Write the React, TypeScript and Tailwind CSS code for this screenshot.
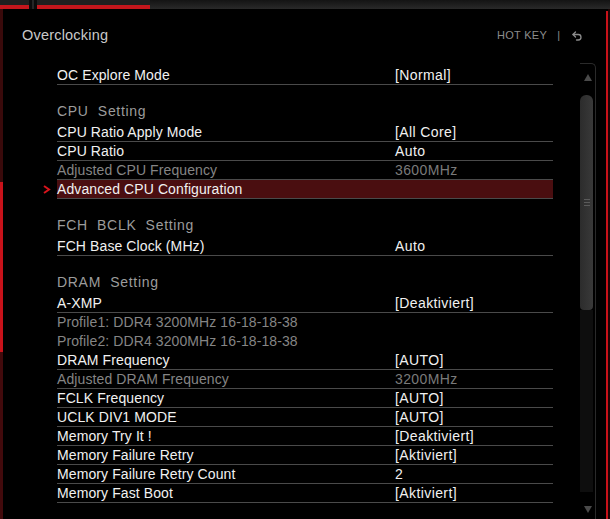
import { Undo2 } from 'lucide-react';

type Row =
  | { kind: 'gap' }
  | { kind: 'head'; label: string }
  | { kind: 'item'; label: string; value?: string; dim?: boolean; active?: boolean; bare?: boolean };

const rows: Row[] = [
  { kind: 'item', label: 'OC Explore Mode', value: '[Normal]' },
  { kind: 'gap' },
  { kind: 'head', label: 'CPU  Setting' },
  { kind: 'item', label: 'CPU Ratio Apply Mode', value: '[All Core]' },
  { kind: 'item', label: 'CPU Ratio', value: 'Auto' },
  { kind: 'item', label: 'Adjusted CPU Frequency', value: '3600MHz', dim: true },
  { kind: 'item', label: 'Advanced CPU Configuration', active: true },
  { kind: 'gap' },
  { kind: 'head', label: 'FCH  BCLK  Setting' },
  { kind: 'item', label: 'FCH Base Clock (MHz)', value: 'Auto' },
  { kind: 'gap' },
  { kind: 'head', label: 'DRAM  Setting' },
  { kind: 'item', label: 'A-XMP', value: '[Deaktiviert]' },
  { kind: 'item', label: 'Profile1: DDR4 3200MHz 16-18-18-38', dim: true, bare: true },
  { kind: 'item', label: 'Profile2: DDR4 3200MHz 16-18-18-38', dim: true, bare: true },
  { kind: 'item', label: 'DRAM Frequency', value: '[AUTO]' },
  { kind: 'item', label: 'Adjusted DRAM Frequency', value: '3200MHz', dim: true },
  { kind: 'item', label: 'FCLK Frequency', value: '[AUTO]' },
  { kind: 'item', label: 'UCLK DIV1 MODE', value: '[AUTO]' },
  { kind: 'item', label: 'Memory Try It !', value: '[Deaktiviert]' },
  { kind: 'item', label: 'Memory Failure Retry', value: '[Aktiviert]' },
  { kind: 'item', label: 'Memory Failure Retry Count', value: '2' },
  { kind: 'item', label: 'Memory Fast Boot', value: '[Aktiviert]' },
];

function TopTab({ width }: { width: string }) {
  return (
    <div className={`${width} flex flex-col`}>
      <div className="h-[5px] bg-[#1f1f1f]" />
      <div className="flex-1 bg-[#c3161c]" />
    </div>
  );
}

function SettingRow({ row }: { row: Row }) {
  if (row.kind === 'gap') return <div className="h-[17px]" />;
  if (row.kind === 'head') {
    return (
      <div className="h-[21px] whitespace-pre text-[14px] leading-[19px] tracking-[0.7px] text-[#9c9c9c]">
        {row.label}
      </div>
    );
  }
  const tone = row.dim ? 'text-[#858585]' : 'text-[#f1f1f1]';
  return (
    <div
      className={`relative flex h-[19px] items-center border-b bg-clip-padding ${
        row.bare ? 'border-transparent' : 'border-[#4a4a4a]'
      } ${row.active ? 'bg-[#4a0e10]' : ''}`}
    >
      {row.active && (
        <svg className="absolute left-[-14px] top-[5px]" width="8" height="9" viewBox="0 0 8 9">
          <path d="M1 1l5 3.5L1 8" fill="none" stroke="#d8141c" strokeWidth="2" />
        </svg>
      )}
      <span className={`w-[338px] shrink-0 text-[14px] leading-[18px] tracking-[0.1px] ${tone}`}>{row.label}</span>
      {row.value && (
        <span className={`text-[14px] leading-[18px] tracking-[0.4px] ${row.dim ? 'text-[#7a7a7a]' : 'text-[#f1f1f1]'}`}>
          {row.value}
        </span>
      )}
    </div>
  );
}

function ScrollBar() {
  return (
    <div className="flex w-[16px] flex-col rounded-tr-[5px] border-r border-t border-[#2a2a2a]">
      <div className="flex h-[31px] items-start justify-center pt-[10px]">
        <svg width="8" height="7" viewBox="0 0 8 7">
          <path d="M4 0L8 7H0z" fill="#4a4a4a" />
        </svg>
      </div>
      <div className="flex h-[215px] w-[13px] items-center justify-center rounded-t-[6px] rounded-b-[4px] bg-gradient-to-r from-[#2c2c2c] to-[#393939]">
        <div className="flex flex-col gap-[2px]">
          <div className="h-[1px] w-[6px] bg-[#5a5a5a]" />
          <div className="h-[1px] w-[6px] bg-[#5a5a5a]" />
          <div className="h-[1px] w-[6px] bg-[#5a5a5a]" />
        </div>
      </div>
      <div className="h-[182px] w-[13px] bg-[#0e0e0e]" />
      <div className="flex flex-1 items-start justify-center pt-[14px]">
        <svg width="8" height="7" viewBox="0 0 8 7">
          <path d="M0 0H8L4 7z" fill="#4a4a4a" />
        </svg>
      </div>
    </div>
  );
}

export default function App() {
  return (
    <div className="flex h-[519px] w-[610px] flex-col overflow-hidden bg-black font-['Liberation_Sans',Arial,sans-serif]">
      {/* tab strip */}
      <div className="flex h-[9px] shrink-0">
        <TopTab width="w-[29px]" />
        <div className="flex w-[8px] justify-center bg-[#0b0b0b]">
          <div className="w-[2px] bg-[#262626]" />
        </div>
        <TopTab width="w-[113px]" />
        <div className="flex-1 bg-gradient-to-b from-[#141414] to-[#2a2a2a]" />
      </div>

      <div className="flex flex-1">
        {/* left accent */}
        <div className="flex w-[3px] flex-col">
          <div className="h-[173px] bg-[#3a0a0b]" />
          <div className="h-[170px] bg-[#c8121a]" />
          <div className="flex-1 bg-[#420a0c]" />
        </div>

        <div className="flex flex-1 flex-col">
          <div className="flex h-[54px] items-center justify-between pb-[1px] pl-[19px] pr-[13px]">
            <span className="text-[14.5px] tracking-[0.2px] text-[#c9c9c9]">Overclocking</span>
            <div className="flex items-center text-[#8c8c8c]">
              <span className="text-[11px] tracking-[0.3px]">HOT KEY</span>
              <span className="ml-[10px] text-[11px]">|</span>
              <Undo2 size={12} strokeWidth={2.6} className="ml-[11px]" />
            </div>
          </div>

          <div className="flex flex-1">
            <div className="w-[550px] pl-[54px] pt-[3px]">
              {rows.map((row, i) => (
                <SettingRow key={i} row={row} />
              ))}
            </div>
            <div className="flex-1" />
            <ScrollBar />
          </div>
        </div>

        {/* right accent */}
        <div className="flex w-[14px]">
          <div className="w-[10px]" />
          <div className="mt-[2px] w-[2px] bg-[#c8121a]" />
          <div className="w-[2px] bg-[#1a0606]" />
        </div>
      </div>
    </div>
  );
}
